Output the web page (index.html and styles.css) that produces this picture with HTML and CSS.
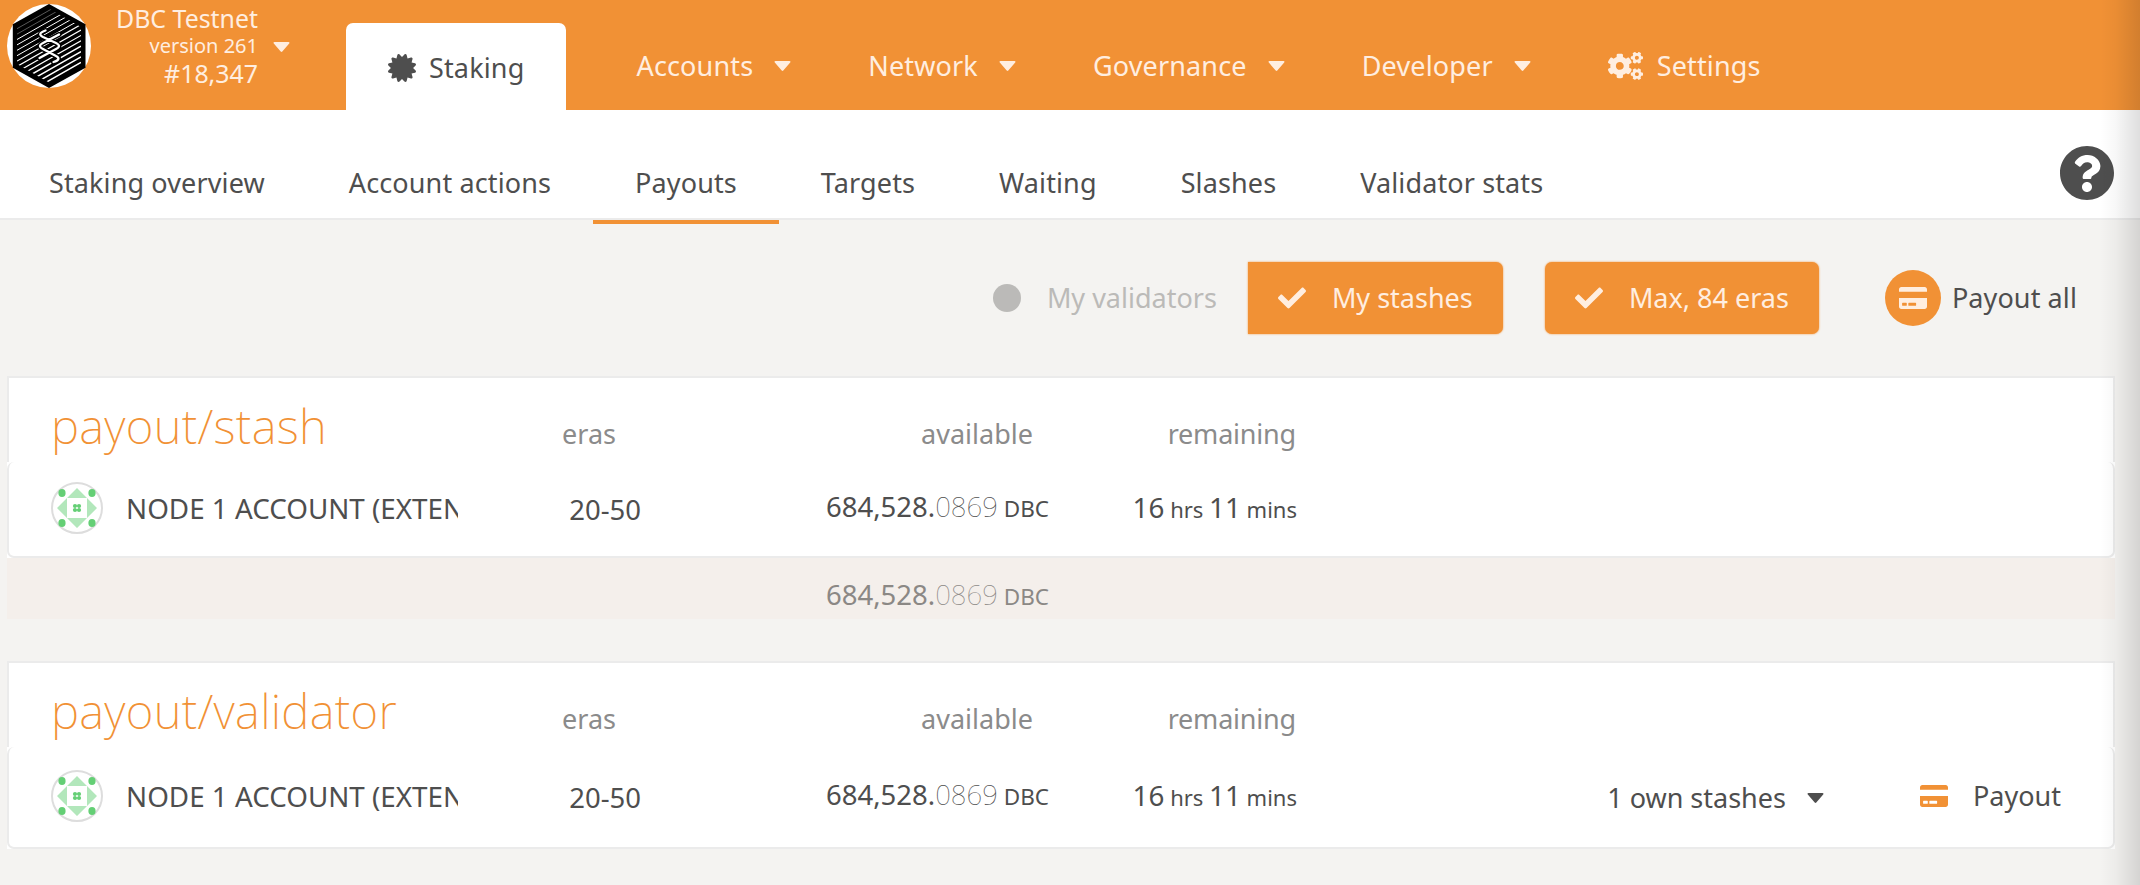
FILE: index.html
```
<!DOCTYPE html>
<html lang="en">
<head>
<meta charset="utf-8">
<title>Staking payouts</title>
<link rel="stylesheet" href="styles.css">
</head>
<body>
<svg class="defs" width="0" height="0" aria-hidden="true">
  <symbol id="caret" viewBox="0 0 16 10"><path d="M1 0h14c1 0 1.300.9.7 1.500L8.800 9.500c-.5.500-1.100.5-1.600 0L.3 1.500C-.3.900 0 0 1 0z"/></symbol>
  <symbol id="check" viewBox="0 0 512 512"><path d="M173.898 439.404l-166.400-166.400c-9.997-9.997-9.997-26.206 0-36.204l36.203-36.204c9.997-9.998 26.207-9.998 36.204 0L192 312.690 432.095 72.596c9.997-9.997 26.207-9.997 36.204 0l36.203 36.204c9.997 9.997 9.997 26.206 0 36.204l-294.400 294.401c-9.998 9.997-26.207 9.997-36.204-.001z"/></symbol>
  <symbol id="card" viewBox="0 32 576 448"><path d="M0 432c0 26.500 21.500 48 48 48h480c26.500 0 48-21.500 48-48V256H0v176zm192-68c0-6.600 5.400-12 12-12h136c6.600 0 12 5.400 12 12v40c0 6.600-5.400 12-12 12H204c-6.600 0-12-5.400-12-12v-40zm-128 0c0-6.600 5.400-12 12-12h72c6.600 0 12 5.400 12 12v40c0 6.600-5.400 12-12 12H76c-6.600 0-12-5.400-12-12v-40zM576 80v48H0V80c0-26.500 21.500-48 48-48h480c26.500 0 48 21.500 48 48z"/></symbol>
  <symbol id="identicon" viewBox="-26 -26 52 52">
    <circle r="25" fill="#fff" stroke="#ddd" stroke-width="2"/>
    <path fill="#b2e7bb" d="M0-20L10-10H-10zM0 20L10 10H-10zM-20 0L-10-10V10zM20 0L10-10V10z"/>
    <g fill="#64cf75"><ellipse cx="-15" cy="-15" rx="3.600" ry="4"/><ellipse cx="15" cy="-15" rx="3.600" ry="4"/><ellipse cx="-15" cy="15" rx="3.600" ry="4"/><ellipse cx="15" cy="15" rx="3.600" ry="4"/>
    <circle cx="-2" cy="-2" r="2.100"/><circle cx="2" cy="-2" r="2.100"/><circle cx="-2" cy="2" r="2.100"/><circle cx="2" cy="2" r="2.100"/></g>
    <circle r=".8" fill="#fff"/>
  </symbol>
</svg>

<header class="topbar">
  <div class="chain">
    <svg class="chain-logo" viewBox="7 4 84 84">
      <defs><clipPath id="hex"><path d="M49 8.500L81 27V64L49 82.500 17 64V27z"/></clipPath></defs>
      <circle cx="49" cy="46" r="42" fill="#fff"/>
      <path d="M49 4L85.500 24.300V67.700L49 88 12.800 67.700V24.300z"/>
      <g clip-path="url(#hex)" stroke="#fff" fill="none">
        <path stroke-width=".5" opacity=".7" d="M17 28.700l64-36.500M17 34.100l64-36.500"/>
        <path stroke-width="1" d="M17 39.500l64-36.500M17 44.900l64-36.500M17 50.300l64-36.500M17 55.700l64-36.500"/>
        <path stroke-width="1.200" d="M17 61.100l64-36.500M17 66.500l64-36.500M17 71.900l64-36.500M17 77.300l64-36.500"/>
        <path stroke-width="1.500" d="M17 82.700l64-36.500M17 88.100l64-36.500M17 93.500l64-36.500M17 98.900l64-36.500"/>
      </g>
      <g fill="none" stroke-linecap="round">
        <path class="helix-gap" d="M45.500 30.500C39 33 39 35 43 37L56 43C60 45 60 47 56 49L39.500 58M59 34.500L43 43C39 45 39 47 43 49L56 56C60 58 59 60.500 53.500 62"/>
        <path class="helix" d="M45.500 30.500C39 33 39 35 43 37L56 43C60 45 60 47 56 49L39.500 58M59 34.500L43 43C39 45 39 47 43 49L56 56C60 58 59 60.500 53.500 62"/>
      </g>
    </svg>
    <div class="chain-info">
      <div class="chain-name">DBC Testnet</div>
      <div class="chain-version">version 261</div>
      <div class="chain-block">#18,347</div>
    </div>
    <svg class="caret"><use href="#caret"/></svg>
  </div>
  <nav class="menu">
    <a class="menu-item active"><svg class="icon-staking" viewBox="0 0 512 512"><path d="M458.622 255.920l45.985-45.005c13.708-12.977 7.316-36.039-10.664-40.339l-62.650-15.990 17.661-62.015c4.991-17.838-11.829-34.663-29.661-29.671l-61.994 17.667-15.984-62.671C337.085.197 313.765-6.276 300.990 7.228L256 53.570 211.011 7.229c-12.630-13.351-36.047-7.234-40.325 10.668l-15.984 62.671-61.995-17.667C74.870 57.907 58.056 74.738 63.046 92.572l17.661 62.015-62.650 15.990C.069 174.878-6.310 197.944 7.392 210.915l45.985 45.005-45.985 45.004c-13.708 12.977-7.316 36.039 10.664 40.339l62.650 15.990-17.661 62.015c-4.991 17.838 11.829 34.663 29.661 29.671l61.994-17.667 15.984 62.671c4.439 18.575 27.696 24.018 40.325 10.668L256 458.610l44.989 46.001c12.500 13.488 35.987 7.486 40.325-10.668l15.984-62.671 61.994 17.667c17.836 4.994 34.651-11.837 29.661-29.671l-17.661-62.015 62.650-15.990c17.987-4.302 24.366-27.367 10.664-40.339l-45.984-45.004z"/></svg>Staking</a>
    <a class="menu-item">Accounts<svg class="caret"><use href="#caret"/></svg></a>
    <a class="menu-item">Network<svg class="caret"><use href="#caret"/></svg></a>
    <a class="menu-item">Governance<svg class="caret"><use href="#caret"/></svg></a>
    <a class="menu-item">Developer<svg class="caret"><use href="#caret"/></svg></a>
    <a class="menu-item"><svg class="icon-cogs" viewBox="0 0 640 512"><path d="M512.1 191l-8.2 14.3c-3 5.3-9.4 7.5-15.1 5.4-11.8-4.4-22.6-10.7-32.1-18.6-4.6-3.8-5.8-10.5-2.8-15.7l8.2-14.3c-6.9-8-12.3-17.3-15.9-27.4h-16.5c-6 0-11.2-4.3-12.2-10.3-2-12-2.1-24.6 0-37.1 1-6 6.2-10.4 12.2-10.4h16.5c3.6-10.1 9-19.4 15.9-27.4l-8.2-14.3c-3-5.2-1.9-11.9 2.8-15.7 9.5-7.9 20.4-14.2 32.1-18.6 5.7-2.1 12.1.1 15.1 5.4l8.2 14.3c10.5-1.9 21.2-1.9 31.7 0L552 6.3c3-5.3 9.4-7.5 15.1-5.4 11.8 4.4 22.6 10.7 32.1 18.6 4.6 3.8 5.8 10.5 2.8 15.7l-8.2 14.3c6.9 8 12.3 17.3 15.9 27.4h16.5c6 0 11.2 4.3 12.2 10.3 2 12 2.1 24.6 0 37.1-1 6-6.2 10.4-12.2 10.4h-16.5c-3.6 10.1-9 19.4-15.9 27.4l8.2 14.3c3 5.2 1.9 11.9-2.8 15.7-9.5 7.9-20.4 14.2-32.1 18.6-5.7 2.1-12.1-.1-15.1-5.4l-8.2-14.3c-10.4 1.9-21.2 1.9-31.7 0zm-10.500-58.800c38.500 29.600 82.400-14.300 52.800-52.800-38.500-29.700-82.400 14.300-52.800 52.800zM386.300 286.100l33.700 16.800c10.100 5.800 14.500 18.100 10.500 29.100-8.900 24.200-26.400 46.400-42.600 65.800-7.400 8.900-20.200 11.100-30.300 5.300l-29.100-16.800c-16 13.700-34.600 24.600-54.900 31.700v33.600c0 11.600-8.300 21.600-19.700 23.600-24.600 4.200-50.400 4.400-75.900 0-11.500-2-20-11.900-20-23.600V418c-20.300-7.200-38.900-18-54.900-31.700L74 403c-10 5.800-22.900 3.600-30.300-5.300-16.200-19.400-33.300-41.600-42.200-65.700-4-10.900.4-23.200 10.500-29.100l33.300-16.800c-3.900-20.900-3.900-42.400 0-63.400L12 205.800c-10.100-5.800-14.600-18.100-10.500-29 8.900-24.200 26-46.400 42.200-65.800 7.400-8.900 20.200-11.100 30.300-5.300l29.100 16.800c16-13.700 34.600-24.600 54.900-31.700V57.100c0-11.500 8.200-21.500 19.600-23.500 24.600-4.200 50.500-4.400 76-.1 11.500 2 20 11.900 20 23.600v33.600c20.300 7.200 38.900 18 54.900 31.700l29.100-16.800c10-5.800 22.900-3.600 30.300 5.300 16.200 19.400 33.200 41.600 42.100 65.800 4 10.900.1 23.200-10 29.100l-33.700 16.800c3.900 21 3.900 42.500 0 63.500zm-117.600 21.100c59.200-77-28.700-164.900-105.700-105.700-59.200 77 28.700 164.900 105.700 105.700zm243.400 182.700l-8.200 14.300c-3 5.300-9.400 7.500-15.100 5.400-11.800-4.400-22.600-10.700-32.100-18.600-4.600-3.800-5.800-10.500-2.800-15.700l8.200-14.300c-6.900-8-12.300-17.300-15.900-27.400h-16.500c-6 0-11.200-4.300-12.200-10.300-2-12-2.100-24.600 0-37.100 1-6 6.200-10.400 12.200-10.400h16.500c3.600-10.100 9-19.400 15.900-27.400l-8.200-14.300c-3-5.200-1.900-11.900 2.800-15.700 9.500-7.900 20.400-14.200 32.100-18.600 5.700-2.100 12.100.1 15.100 5.400l8.200 14.300c10.500-1.900 21.200-1.900 31.700 0l8.200-14.300c3-5.300 9.400-7.500 15.100-5.400 11.800 4.400 22.600 10.700 32.100 18.600 4.600 3.800 5.800 10.500 2.800 15.700l-8.200 14.300c6.900 8 12.300 17.300 15.900 27.400h16.500c6 0 11.200 4.300 12.200 10.300 2 12 2.100 24.600 0 37.100-1 6-6.200 10.400-12.200 10.400h-16.500c-3.600 10.100-9 19.400-15.900 27.400l8.200 14.300c3 5.200 1.900 11.900-2.800 15.700-9.500 7.900-20.400 14.200-32.100 18.600-5.700 2.100-12.100-.1-15.100-5.400l-8.200-14.300c-10.400 1.900-21.200 1.900-31.700 0zM501.600 431c38.500 29.600 82.400-14.300 52.800-52.800-38.500-29.600-82.400 14.300-52.800 52.800z"/></svg>Settings</a>
  </nav>
</header>

<nav class="tabs">
  <a class="tab">Staking overview</a>
  <a class="tab">Account actions</a>
  <a class="tab current">Payouts</a>
  <a class="tab">Targets</a>
  <a class="tab">Waiting</a>
  <a class="tab">Slashes</a>
  <a class="tab">Validator stats</a>
  <svg class="help" viewBox="8 8 496 496"><path d="M504 256c0 136.997-111.043 248-248 248S8 392.997 8 256C8 119.083 119.043 8 256 8s248 111.083 248 248zM262.655 90c-54.497 0-89.255 22.957-116.549 63.758-3.536 5.286-2.353 12.415 2.715 16.258l34.699 26.310c5.205 3.947 12.621 3.008 16.665-2.122 17.864-22.658 30.113-35.797 57.303-35.797 20.429 0 45.698 13.148 45.698 32.958 0 14.976-12.363 22.667-32.534 33.976C247.128 238.528 216 254.941 216 296v4c0 6.627 5.373 12 12 12h56c6.627 0 12-5.373 12-12v-1.333c0-28.462 83.186-29.647 83.186-106.667 0-58.002-60.165-102-116.531-102zM256 338c-25.365 0-46 20.635-46 46 0 25.364 20.635 46 46 46s46-20.636 46-46c0-25.364-20.635-46-46-46z"/></svg>
</nav>

<main>
  <div class="actions">
    <button class="toggle off"><span class="dot"></span>My validators</button>
    <button class="toggle on last"><svg class="check"><use href="#check"/></svg>My stashes</button>
    <button class="toggle on single"><svg class="check"><use href="#check"/></svg>Max, 84 eras</button>
    <button class="payout-all"><span class="round"><svg class="card-icon"><use href="#card"/></svg></span>Payout all</button>
  </div>

  <section class="table">
    <div class="row head">
      <h1>payout/stash</h1><span class="h-eras">eras</span><span class="h-available">available</span><span class="h-remaining">remaining</span>
    </div>
    <div class="row body">
      <div class="account"><svg class="identicon"><use href="#identicon"/></svg><span class="name">NODE 1 ACCOUNT (EXTEN</span></div>
      <span class="eras">20-50</span>
      <span class="amount">684,528.<span class="decimals">0869</span><small> DBC</small></span>
      <span class="time">16<small> hrs </small>11<small> mins</small></span>
    </div>
    <div class="row foot">
      <span class="amount">684,528.<span class="decimals">0869</span><small> DBC</small></span>
    </div>
  </section>

  <section class="table validators">
    <div class="row head">
      <h1>payout/validator</h1><span class="h-eras">eras</span><span class="h-available">available</span><span class="h-remaining">remaining</span>
    </div>
    <div class="row body">
      <div class="account"><svg class="identicon"><use href="#identicon"/></svg><span class="name">NODE 1 ACCOUNT (EXTEN</span></div>
      <span class="eras">20-50</span>
      <span class="amount">684,528.<span class="decimals">0869</span><small> DBC</small></span>
      <span class="time">16<small> hrs </small>11<small> mins</small></span>
      <div class="row-actions">
        <span class="stashes">1 own stashes<svg class="caret"><use href="#caret"/></svg></span>
        <button class="payout"><svg class="card-icon"><use href="#card"/></svg>Payout</button>
      </div>
    </div>
  </section>
</main>
<div class="edge-shadow"></div>
</body>
</html>
```
FILE: styles.css
```
* { box-sizing: border-box; }

body {
  margin: 0;
  height: 885px;
  overflow: hidden;
  position: relative;
  background: #f4f3f1;
  color: #4e4e4e;
  font: 27px/36px "Noto Sans", sans-serif;
}

.defs { position: absolute; }
svg { display: block; flex: none; fill: currentColor; }

button {
  display: flex;
  align-items: center;
  padding: 0;
  border: 0;
  background: none;
  color: inherit;
  font: inherit;
  white-space: nowrap;
}

.caret { width: 17px; height: 10px; }

/* Top bar */
.topbar {
  display: flex;
  height: 110px;
  background: #f19135;
  color: #ffeee0;
}

.chain { display: flex; width: 346px; padding: 4px 0 0 7px; }
.chain-logo { width: 84px; height: 84px; color: #000; }
.chain-info { width: 167px; text-align: right; font-size: 24.900px; line-height: 28px; }
.chain-version { font-size: 20px; line-height: 27px; }
.chain .caret { margin: 38px 0 0 15px; }
.helix { stroke: #fff; stroke-width: 2.300; }
.helix-gap { stroke: #000; stroke-width: 5; }

.menu { display: flex; align-items: flex-end; letter-spacing: .15px; }
.menu-item {
  display: flex;
  align-items: center;
  height: 87px;
  padding: 0 38.500px;
  padding-bottom: 2px;
}
.menu-item .caret { margin-left: 21px; }
.menu-item.active {
  width: 220px;
  margin-right: 32px;
  padding: 2px 0 0 42px;
  border-radius: 7px 7px 0 0;
  background: #fff;
  color: #4e4e4e;
}
.icon-staking { width: 28px; height: 28px; margin-right: 13px; }
.icon-cogs { width: 35px; height: 28px; margin: 0 14px 0 0; }

/* Tabs */
.tabs {
  display: flex;
  align-items: flex-end;
  height: 110px;
  padding-left: 7px;
  border-bottom: 2px solid #ebebeb;
  background: #fff;
  letter-spacing: .12px;
}
.tab { height: 78px; padding: 19px 42px 0; margin-bottom: -6px; line-height: 36px; }
.tab.current { border-bottom: 4px solid #f19135; }
.help { width: 54px; height: 54px; margin: 0 26px 18px auto; }

/* Filters */
.actions {
  display: flex;
  align-items: center;
  justify-content: flex-end;
  height: 156px;
  padding: 0 63px 1px 0;
}
.toggle { height: 72px; }
.toggle.off { color: #bbbab8; padding-right: 31px; }
.dot { width: 28px; height: 28px; margin-right: 26px; border-radius: 50%; background: currentColor; }
.toggle.on {
  padding: 0 0 0 30px;
  border-radius: 7px;
  background: #f19135;
  color: #ffeee0;
  box-shadow: 0 0 2px #f19135;
}
.toggle.last { width: 255px; margin-right: 42px; border-radius: 0 7px 7px 0; }
.toggle.single { width: 274px; margin-right: 66px; }
.check { width: 28px; height: 28px; margin-right: 26px; }
.payout-all { letter-spacing: .1px; }
.round {
  display: grid;
  place-items: center;
  width: 56px;
  height: 56px;
  margin-right: 11px;
  border-radius: 50%;
  background: #f19135;
  color: #ffeee0;
}
.card-icon { width: 28px; height: 22px; }

/* Payout tables */
.table { width: 2108px; margin-left: 7px; background: #fff; }
.row {
  display: grid;
  grid-template-columns: 407px 183px 408px 248px 1fr;
  padding-left: 42px;
  border: solid #ebebeb;
  border-width: 0 2px;
  text-align: right;
  white-space: nowrap;
}
.head { height: 86px; border-top-width: 2px; color: #8b8b8b; }
.head span { padding-top: 38px; }
.head .h-eras { padding-right: 25px; }
.head .h-available { padding-right: 16px; }
.head .h-remaining { padding-right: 1px; letter-spacing: -.2px; }
.head h1 {
  margin: 0;
  padding-top: 20px;
  color: #f19135;
  font-size: 47.500px;
  font-weight: 200;
  letter-spacing: .3px;
  line-height: 56px;
  text-align: left;
}
.body { height: 96px; padding-bottom: 2px; align-items: center; border-bottom-width: 2px; border-radius: 7px; }
.account { display: flex; align-items: center; overflow: hidden; }
.identicon { width: 52px; height: 52px; margin-right: 23px; }
.name { flex: 1; overflow: hidden; text-align: left; font-size: 27.800px; line-height: 36px; padding-bottom: 1px; }
.eras { padding-top: 4px; font-size: 27.500px; }
.amount { font-size: 27.500px; }
.decimals { font-weight: 100; }
.amount small { font-size: 22.500px; }
.time { font-size: 27.800px; }
.time small { font-size: 22px; }

.foot {
  height: 61px;
  padding-top: 19px;
  border-color: transparent;
  background: #f4efeb;
  color: #8b8885;
}
.foot .amount { grid-column: 3; }

.validators { margin-top: 42px; }
.validators .body { height: 102px; }
.row-actions { display: flex; justify-content: flex-end; align-items: center; padding-right: 52px; }
.stashes { display: flex; align-items: center; margin-right: 96px; padding-top: 4px; }
.stashes .caret { margin-left: 21px; }
.payout .card-icon { margin-right: 25px; color: #f19135; }

/* Shade cast along the right edge of the window */
.edge-shadow {
  position: absolute;
  top: 0;
  right: 0;
  width: 40px;
  height: 100%;
  background: linear-gradient(to right, rgba(0,0,0,0), rgba(0,0,0,.03) 40%, rgba(0,0,0,.13));
}
```
